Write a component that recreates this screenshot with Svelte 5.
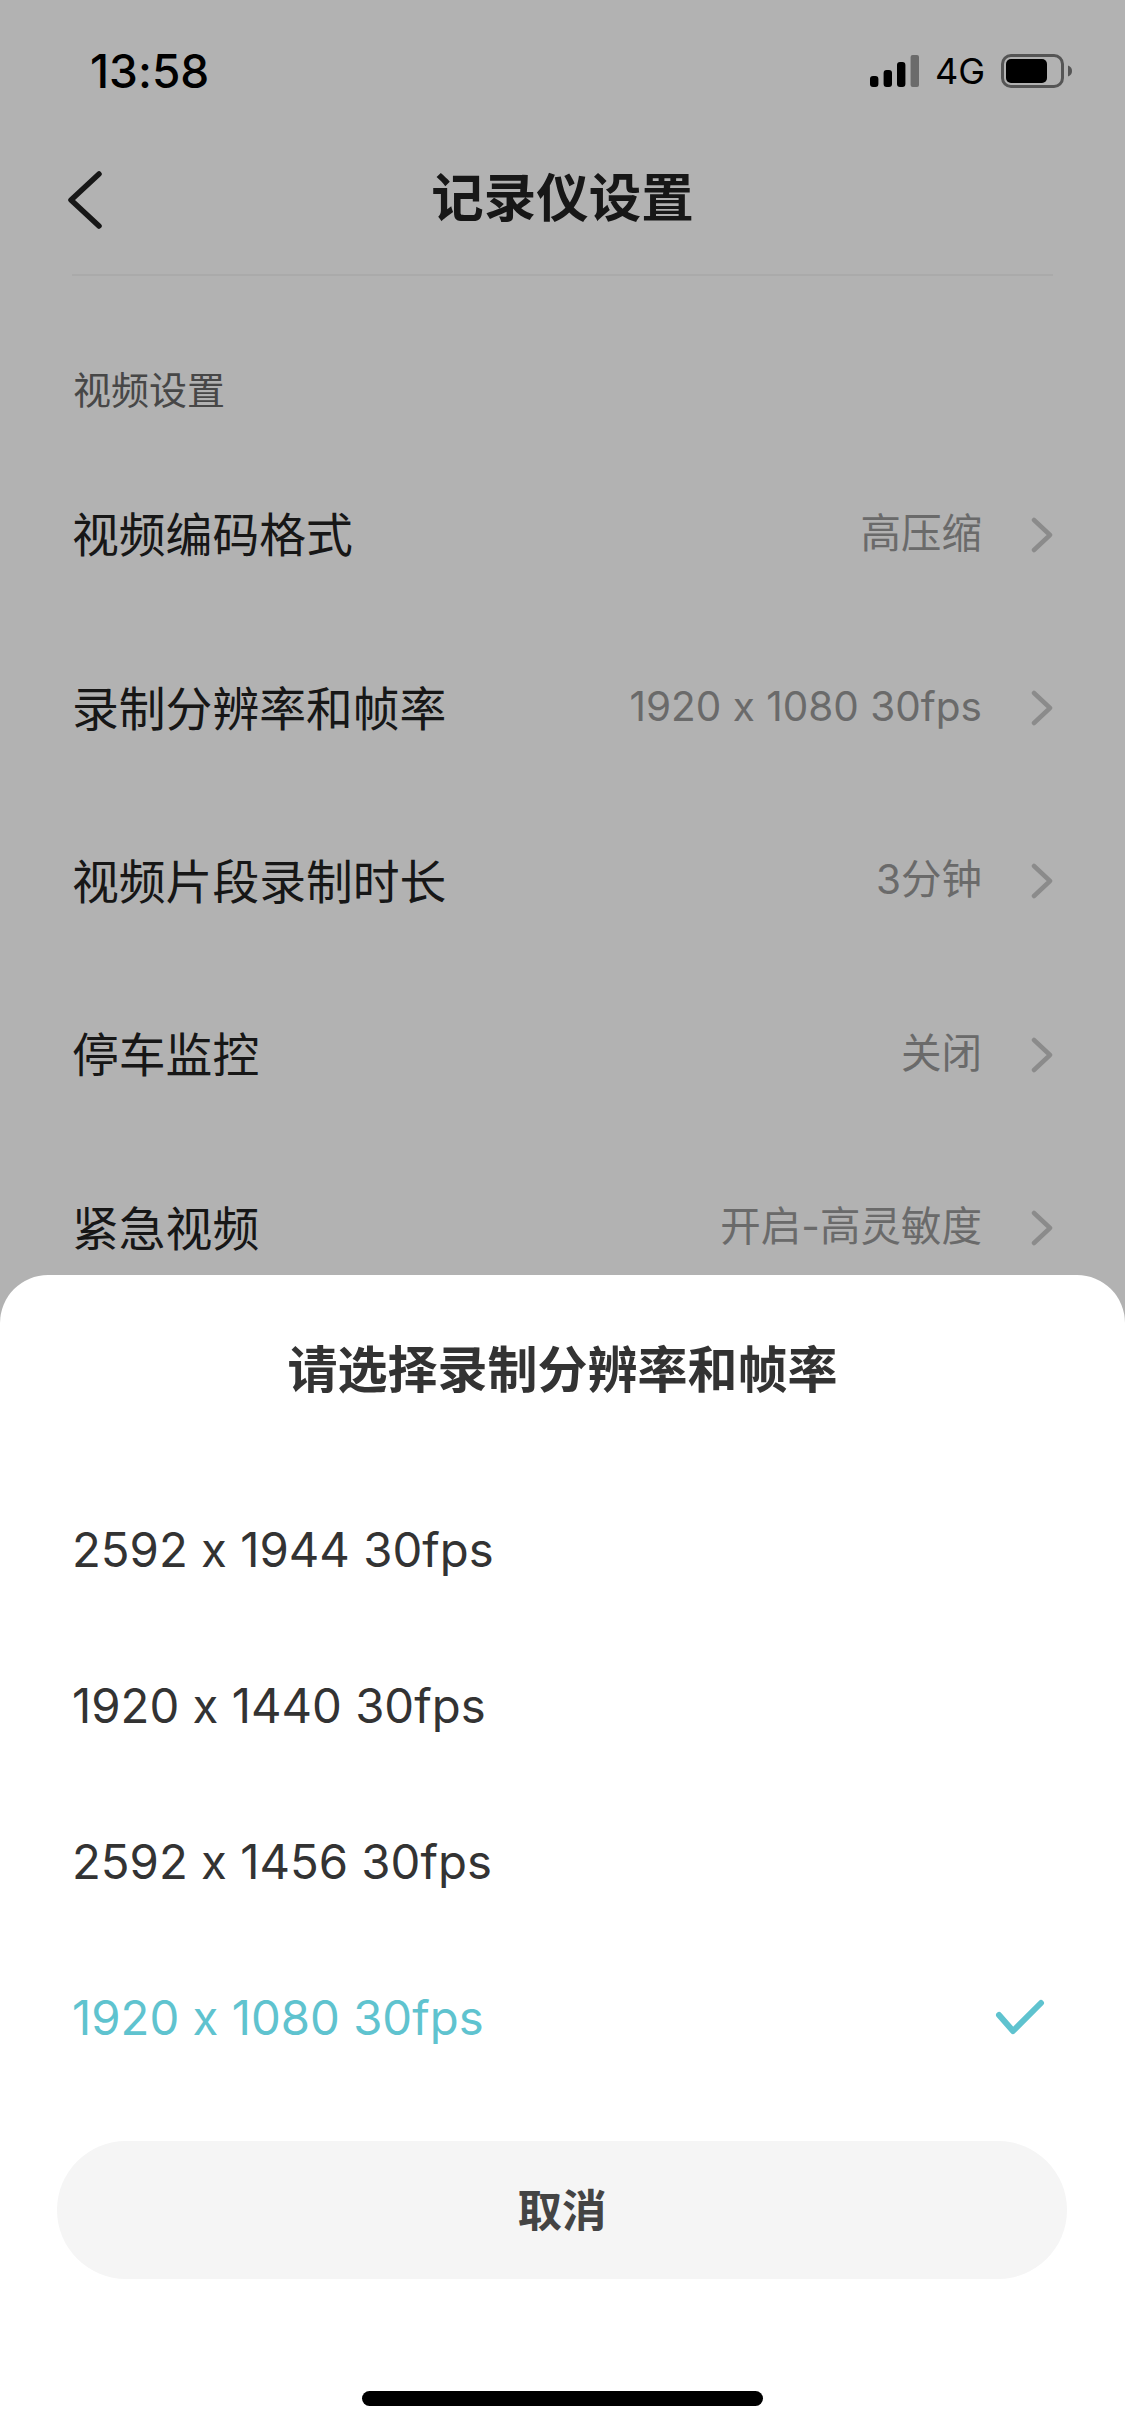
<script>
  const rows = [
    { label: "视频编码格式", value: "高压缩" },
    { label: "录制分辨率和帧率", value: "1920 x 1080 30fps" },
    { label: "视频片段录制时长", value: "3分钟" },
    { label: "停车监控", value: "关闭" },
    { label: "紧急视频", value: "开启-高灵敏度" },
  ];
  const options = [
    "2592 x 1944 30fps",
    "1920 x 1440 30fps",
    "2592 x 1456 30fps",
    "1920 x 1080 30fps",
  ];
  let selected = "1920 x 1080 30fps";
</script>

<div class="page">
  <div class="status">
    <span class="time">13:58</span>
    <div class="status-right">
      <svg class="signal" width="49" height="32" viewBox="0 0 49 32">
        <rect x="0" y="21" width="8.4" height="11" rx="3" fill="#000" />
        <rect x="13.6" y="15" width="8.4" height="17" rx="3" fill="#000" />
        <rect x="27" y="7" width="8.4" height="25" rx="3" fill="#000" />
        <rect x="40.6" y="0" width="8.4" height="32" rx="2" fill="#9a9a9a" />
      </svg>
      <span class="net">4G</span>
      <svg class="battery" width="71" height="34" viewBox="0 0 71 34">
        <rect x="1.5" y="1.5" width="60" height="31" rx="8.5" fill="none" stroke="#7a7a7a" stroke-width="3" />
        <rect x="5" y="5" width="41" height="24" rx="5" fill="#000" />
        <path d="M67 11.5 C70 12.5 71 14.5 71 17 C71 19.5 70 21.5 67 22.5 Z" fill="#7a7a7a" />
      </svg>
    </div>
  </div>

  <div class="nav">
    <svg class="back" width="34" height="58" viewBox="0 0 34 58">
      <path d="M31 3 L3 29 L31 55" fill="none" stroke="#222" stroke-width="5.5" stroke-linecap="round" stroke-linejoin="round" />
    </svg>
    <h1>记录仪设置</h1>
  </div>

  <div class="section">视频设置</div>

  <div class="list">
    {#each rows as row}
      <div class="row">
        <span class="label">{row.label}</span>
        <span class="value">{row.value}</span>
        <svg class="chev" width="22" height="36" viewBox="0 0 22 36">
          <path d="M3 3 L19 18 L3 33" fill="none" stroke="#c8c8c8" stroke-width="4.5" stroke-linecap="round" stroke-linejoin="round" />
        </svg>
      </div>
    {/each}
  </div>

  <div class="mask"></div>

  <div class="sheet">
    <div class="sheet-title">请选择录制分辨率和帧率</div>
    <div class="options">
      {#each options as opt}
        <div class="option" class:active={opt == selected}>
          <span>{opt}</span>
          {#if opt == selected}
            <svg width="50" height="38" viewBox="0 0 50 38">
              <path d="M4 17 L18 33 L46 5" fill="none" stroke="#5fc3cf" stroke-width="6" stroke-linecap="round" stroke-linejoin="round" />
            </svg>
          {/if}
        </div>
      {/each}
    </div>
    <button class="cancel"><span>取消</span></button>
    <div class="home"></div>
  </div>
</div>

<style>
  :global(body) {
    margin: 0;
  }

  .page {
    position: relative;
    width: 1125px;
    height: 2435px;
    overflow: hidden;
    background: #fff;
    font-family: Inter, "Noto Sans CJK SC", sans-serif;
    font-feature-settings: "calt" 0;
    color: #222;
  }

  .status {
    height: 142px;
    padding: 0 53px 0 90px;
    box-sizing: border-box;
    display: flex;
    justify-content: space-between;
    align-items: center;
  }

  .time {
    font-size: 46px;
    font-weight: 500;
    color: #000;
  }

  .status-right {
    display: flex;
    align-items: center;
    gap: 16px;
  }

  .net {
    font-size: 36px;
    color: #000;
  }

  .nav {
    position: relative;
    height: 134px;
    margin: 0 72px;
    padding-bottom: 28px;
    box-sizing: border-box;
    border-bottom: 2px solid #f4f4f4;
    display: flex;
    align-items: center;
    justify-content: center;
  }

  .back {
    position: absolute;
    left: -4px;
    top: 29px;
  }

  h1 {
    margin: 0;
    font-size: 52.5px;
    font-weight: 600;
  }

  .section {
    margin: 90px 73px 0;
    font-size: 38px;
    line-height: 48px;
    color: #666;
  }

  .list {
    margin-top: 34px;
  }

  .row {
    height: 173.4px;
    padding: 0 72px 0 72px;
    display: flex;
    align-items: center;
  }

  .label {
    flex: 1;
    font-size: 46.8px;
    padding-bottom: 6px;
  }

  .value {
    font-size: 40.5px;
    line-height: 50px;
    color: #999;
    padding-bottom: 2px;
  }

  .chev {
    margin-left: 49px;
  }

  .mask {
    position: absolute;
    inset: 0;
    background: rgba(0, 0, 0, 0.3);
  }

  .sheet {
    position: absolute;
    left: 0;
    right: 0;
    bottom: 0;
    height: 1160px;
    background: #fff;
    border-radius: 48px 48px 0 0;
    display: flex;
    flex-direction: column;
  }

  .sheet-title {
    margin-top: 62px;
    text-align: center;
    font-size: 50px;
    line-height: 66px;
    font-weight: 600;
    color: #333;
  }

  .options {
    margin-top: 68px;
  }

  .option {
    height: 156px;
    padding: 0 80px 0 72px;
    display: flex;
    align-items: center;
    justify-content: space-between;
    font-size: 47.3px;
    color: #333;
  }

  .option.active {
    color: #5fc3cf;
  }

  .cancel {
    margin: 46px 58px 0 57px;
    height: 138px;
    padding: 0 0 5px;
    border: 0;
    border-radius: 69px;
    background: #f5f5f5;
    font: 600 44.5px Inter, "Noto Sans CJK SC", sans-serif;
    color: #444;
  }

  .home {
    margin: 112px auto 0;
    width: 401px;
    height: 15px;
    border-radius: 8px;
    background: #000;
  }
</style>
